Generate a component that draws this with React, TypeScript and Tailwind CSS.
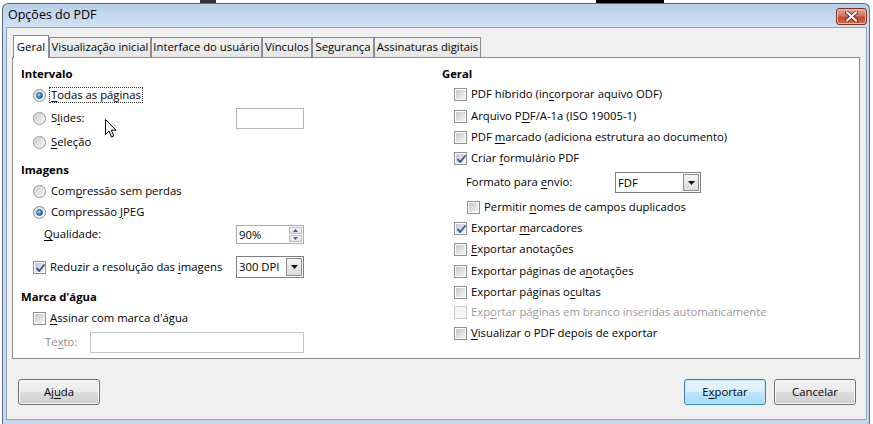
import React from "react";

function M({ children }: { children: React.ReactNode }) {
  return <u className="underline underline-offset-[2px] decoration-[1px]">{children}</u>;
}

function Radio({ checked }: { checked?: boolean }) {
  return (
    <span className="relative inline-flex w-[13px] h-[13px] shrink-0 rounded-full border border-[#8e8f8f] bg-[linear-gradient(135deg,#dcdcdc,#fbfbfb)] items-center justify-center">
      {checked ? (
        <span className="w-[7px] h-[7px] rounded-full border border-[#1b5d98] bg-[radial-gradient(circle_at_35%_35%,#b6e2ff_0%,#3b93d8_45%,#0d4f8f_100%)]" />
      ) : (
        <span className="w-[9px] h-[9px] rounded-full bg-[linear-gradient(135deg,#cbcdd0,#f7f7f7)]" />
      )}
    </span>
  );
}

function Check({ checked, disabled }: { checked?: boolean; disabled?: boolean }) {
  return (
    <span
      className={
        disabled
          ? "relative inline-flex w-[13px] h-[13px] shrink-0 border border-[#c9c9c9] bg-[#f7f7f7] items-center justify-center"
          : "relative inline-flex w-[13px] h-[13px] shrink-0 border border-[#8e8f8f] bg-white items-center justify-center"
      }
    >
      <span
        className={
          disabled
            ? "w-[9px] h-[9px] bg-[#f4f4f4]"
            : "w-[9px] h-[9px] bg-[linear-gradient(135deg,#c3c8cf,#f4f4f4)]"
        }
      />
      {checked && (
        <svg className="absolute left-[1px] top-[1px]" width="11" height="11" viewBox="0 0 11 11">
          <path d="M2 5.5 L4.3 8 L9 2" fill="none" stroke="#3a5a98" strokeWidth="1.9" strokeLinecap="round" strokeLinejoin="round" />
        </svg>
      )}
    </span>
  );
}

function Combo({ value, w }: { value: string; w: string }) {
  return (
    <div className={`${w} h-full flex border border-[#7f7f7f] bg-white`}>
      <div className="flex-1 flex items-center pl-[2px] leading-none">{value}</div>
      <div className="w-[16px] my-[1px] mr-[1px] border border-[#8c8c8c] bg-[linear-gradient(#f6f6f6,#dcdcdc)] flex items-center justify-center">
        <svg width="7" height="4" viewBox="0 0 7 4">
          <path d="M0 0 H7 L3.5 4 Z" fill="#111" />
        </svg>
      </div>
    </div>
  );
}

function Tab({ label, w, active }: { label: React.ReactNode; w: string; active?: boolean }) {
  return active ? (
    <div className={`${w} h-[23px] -mb-[1px] relative z-10 border border-b-0 border-[#898c95] bg-white flex items-start justify-center pt-[3px]`}>
      {label}
    </div>
  ) : (
    <div className={`${w} h-[20px] border border-b-0 border-[#898c95] bg-[linear-gradient(#f3f3f3,#e6e6e6)] flex items-center justify-center whitespace-nowrap`}>
      {label}
    </div>
  );
}

function Btn({ children, def }: { children: React.ReactNode; def?: boolean }) {
  return (
    <div
      className={
        def
          ? "w-[82px] h-[26px] rounded-[3px] border border-[#3c7fb1] bg-[linear-gradient(#eaf6fd_0%,#d9f0fc_50%,#bee6fd_51%,#a7d9f5_100%)] shadow-[inset_0_0_0_1px_#c4e7fa] flex items-center justify-center"
          : "w-[82px] h-[26px] rounded-[3px] border border-[#707070] bg-[linear-gradient(#f2f2f2_0%,#ebebeb_50%,#dddddd_51%,#cfcfcf_100%)] shadow-[inset_0_0_0_1px_#fcfcfc] flex items-center justify-center"
      }
    >
      {children}
    </div>
  );
}

export default function App() {
  return (
    <div className="relative w-[873px] h-[424px] overflow-hidden bg-white text-[11.3px] text-black font-['Open_Sans','Noto_Sans',sans-serif]">
      {/* desktop strip */}
      <div className="h-[3px] flex">
        <div className="w-[200px]" />
        <div className="w-[16px] bg-[#333]" />
        <div className="w-[380px]" />
        <div className="w-[68px] bg-black" />
      </div>
      {/* window */}
      <div className="ml-[2px] w-[868px] h-[421px] rounded-t-[6px] border border-b-0 border-[#5c6d83] bg-[linear-gradient(#b8cfe9_0px,#d2e1f2_24px,#c8daee_40px,#c4d7ed_100%)] flex flex-col pl-[3px] pr-[2px]">
        {/* title bar */}
        <div className="h-[23px] flex items-start justify-between">
          <div className="pl-[2px] h-[23px] flex items-center text-[12.5px] leading-none">Opções do PDF</div>
          <div className="mt-[4px] mr-[0px] w-[31px] h-[17px] rounded-[3px] border border-[#7a3327] bg-[linear-gradient(#e9a99b_0%,#d4735f_45%,#c34a35_55%,#cf6a50_100%)] shadow-[inset_0_0_0_1px_#eeb7aa] flex items-center justify-center">
            <svg width="13" height="11" viewBox="0 0 13 11">
              <path d="M2 1.5 L11 9.5 M11 1.5 L2 9.5" stroke="#5a2118" strokeWidth="3.6" strokeLinecap="square" />
              <path d="M2 1.5 L11 9.5 M11 1.5 L2 9.5" stroke="#ffffff" strokeWidth="2" strokeLinecap="square" />
            </svg>
          </div>
        </div>
        {/* client */}
        <div className="h-[393px] border border-[#8da2bc] bg-[#f0f0f0] flex flex-col">
          <div className="pt-[7px] pl-[5px] pr-[6px]">
            {/* tabs */}
            <div className="h-[22px] flex items-end pl-[1px]">
              <Tab w="w-[36px]" active label={<span>Geral</span>} />
              <Tab w="w-[102px]" label={<span>Visualização inicial</span>} />
              <Tab w="w-[111px]" label={<span>Interface do usuário</span>} />
              <Tab w="w-[50px]" label={<span>Vínculos</span>} />
              <Tab w="w-[62px]" label={<span>Segurança</span>} />
              <Tab w="w-[107px]" label={<span>Assinaturas digitais</span>} />
            </div>
            {/* pane */}
            <div className="h-[302px] border border-[#898c95] bg-white flex">
              {/* left column */}
              <div className="w-[429px] pl-[8px] flex flex-col">
                <div className="w-[283px] flex flex-col">
                  <div className="mt-[8px] h-[16px] flex items-center font-bold">Intervalo</div>
                  <div className="mt-[2px] h-[22px] flex items-center pl-[12px] gap-[4px]">
                    <Radio checked />
                    <span className="px-[1px] outline-1 outline-dotted outline-[#333] leading-[14px]">
                      <M>T</M>odas as páginas
                    </span>
                  </div>
                  <div className="mt-[1px] h-[22px] flex items-center pl-[12px] gap-[5px]">
                    <Radio />
                    <span>
                      S<M>l</M>ides:
                    </span>
                    <div className="ml-auto w-[68px] h-[21px] border border-[#b5b5b5] bg-white" />
                  </div>
                  <div className="mt-[2px] h-[22px] flex items-center pl-[12px] gap-[5px]">
                    <Radio />
                    <span>
                      <M>S</M>eleção
                    </span>
                  </div>
                  <div className="mt-[9px] h-[16px] flex items-center font-bold">Imagens</div>
                  <div className="mt-[2px] h-[22px] flex items-center pl-[12px] gap-[5px]">
                    <Radio />
                    <span>
                      Com<M>p</M>ressão sem perdas
                    </span>
                  </div>
                  <div className="h-[20px] flex items-center pl-[12px] gap-[5px]">
                    <Radio checked />
                    <span>
                      Compressão <M>J</M>PEG
                    </span>
                  </div>
                  <div className="mt-[3px] h-[19px] flex items-center pl-[23px]">
                    <span>
                      <M>Q</M>ualidade:
                    </span>
                    <div className="ml-auto w-[68px] h-full flex border border-[#a9a9a9] bg-white">
                      <div className="flex-1 flex items-center pl-[2px] leading-none">90%</div>
                      <div className="w-[15px] flex flex-col gap-[1px] p-[1px]">
                        <div className="flex-1 border border-[#b5bcc7] bg-[linear-gradient(#f5f6f8,#dfe3e9)] flex items-center justify-center">
                          <svg width="5" height="3" viewBox="0 0 5 3"><path d="M0 3 H5 L2.5 0 Z" fill="#4d6185" /></svg>
                        </div>
                        <div className="flex-1 border border-[#b5bcc7] bg-[linear-gradient(#f5f6f8,#dfe3e9)] flex items-center justify-center">
                          <svg width="5" height="3" viewBox="0 0 5 3"><path d="M0 0 H5 L2.5 3 Z" fill="#4d6185" /></svg>
                        </div>
                      </div>
                    </div>
                  </div>
                  <div className="mt-[12px] h-[22px] flex items-center pl-[12px] gap-[4px]">
                    <Check checked />
                    <span>
                      Reduzir a resolução das <M>i</M>magens
                    </span>
                    <div className="ml-auto h-full">
                      <Combo value="300 DPI" w="w-[68px]" />
                    </div>
                  </div>
                  <div className="mt-[11px] h-[16px] flex items-center font-bold">Marca d'água</div>
                  <div className="mt-[3px] h-[20px] flex items-center pl-[12px] gap-[4px]">
                    <Check />
                    <span>
                      <M>A</M>ssinar com marca d'água
                    </span>
                  </div>
                  <div className="mt-[4px] h-[21px] flex items-center pl-[24px]">
                    <span className="text-[#8a8a8a]">
                      Te<M>x</M>to:
                    </span>
                    <div className="ml-auto w-[214px] h-full border border-[#c4c4c4] bg-white" />
                  </div>
                </div>
              </div>
              {/* right column */}
              <div className="flex-1 flex flex-col">
                <div className="mt-[8px] h-[16px] flex items-center font-bold">Geral</div>
                <div className="mt-[2px] h-[20px] flex items-center pl-[12px] gap-[4px]">
                  <Check />
                  <span>
                    PDF híbrido (in<M>c</M>orporar aquivo ODF)
                  </span>
                </div>
                <div className="mt-[2px] h-[20px] flex items-center pl-[12px] gap-[4px]">
                  <Check />
                  <span>
                    Arquivo P<M>D</M>F/A-1a (ISO 19005-1)
                  </span>
                </div>
                <div className="mt-[1px] h-[20px] flex items-center pl-[12px] gap-[4px]">
                  <Check />
                  <span>
                    PDF <M>m</M>arcado (adiciona estrutura ao documento)
                  </span>
                </div>
                <div className="mt-[1px] h-[20px] flex items-center pl-[12px] gap-[4px]">
                  <Check checked />
                  <span>
                    Criar <M>f</M>ormulário PDF
                  </span>
                </div>
                <div className="mt-[4px] h-[21px] flex items-center pl-[24px]">
                  <span className="w-[149px]">
                    Formato para <M>e</M>nvio:
                  </span>
                  <Combo value="FDF" w="w-[86px]" />
                </div>
                <div className="mt-[4px] h-[20px] flex items-center pl-[25px] gap-[4px]">
                  <Check />
                  <span>
                    Permitir <M>n</M>omes de campos duplicados
                  </span>
                </div>
                <div className="mt-[1px] h-[20px] flex items-center pl-[12px] gap-[4px]">
                  <Check checked />
                  <span>
                    Exportar <M>m</M>arcadores
                  </span>
                </div>
                <div className="mt-[1px] h-[20px] flex items-center pl-[12px] gap-[4px]">
                  <Check />
                  <span>
                    <M>E</M>xportar anotações
                  </span>
                </div>
                <div className="mt-[2px] h-[20px] flex items-center pl-[12px] gap-[4px]">
                  <Check />
                  <span>
                    Exportar páginas de a<M>n</M>otações
                  </span>
                </div>
                <div className="mt-[1px] h-[20px] flex items-center pl-[12px] gap-[4px]">
                  <Check />
                  <span>
                    Exportar páginas o<M>c</M>ultas
                  </span>
                </div>
                <div className="h-[20px] flex items-center pl-[12px] gap-[4px]">
                  <Check disabled />
                  <span className="text-[#9a9a9a]">
                    Exp<M>o</M>rtar páginas em branco inseridas automaticamente
                  </span>
                </div>
                <div className="mt-[1px] h-[20px] flex items-center pl-[12px] gap-[4px]">
                  <Check />
                  <span>
                    <M>V</M>isualizar o PDF depois de exportar
                  </span>
                </div>
              </div>
            </div>
          </div>
          {/* buttons */}
          <div className="mt-[20px] flex pl-[11px] pr-[10px]">
            <Btn>
              <span>
                Aj<M>u</M>da
              </span>
            </Btn>
            <div className="ml-auto flex gap-[8px]">
              <Btn def>
                <span>
                  E<M>x</M>portar
                </span>
              </Btn>
              <Btn>
                <span>Cancelar</span>
              </Btn>
            </div>
          </div>
        </div>
      </div>
      {/* mouse cursor */}
      <svg className="absolute left-[105px] top-[119px]" width="13" height="20" viewBox="0 0 13 20">
        <path d="M0.5 0.5 L0.5 15.5 L4 12 L6.5 18 L8.8 17 L6.3 11.2 L11 11.2 Z" fill="#ffffff" stroke="#000000" strokeWidth="1" strokeLinejoin="miter" />
      </svg>
    </div>
  );
}
